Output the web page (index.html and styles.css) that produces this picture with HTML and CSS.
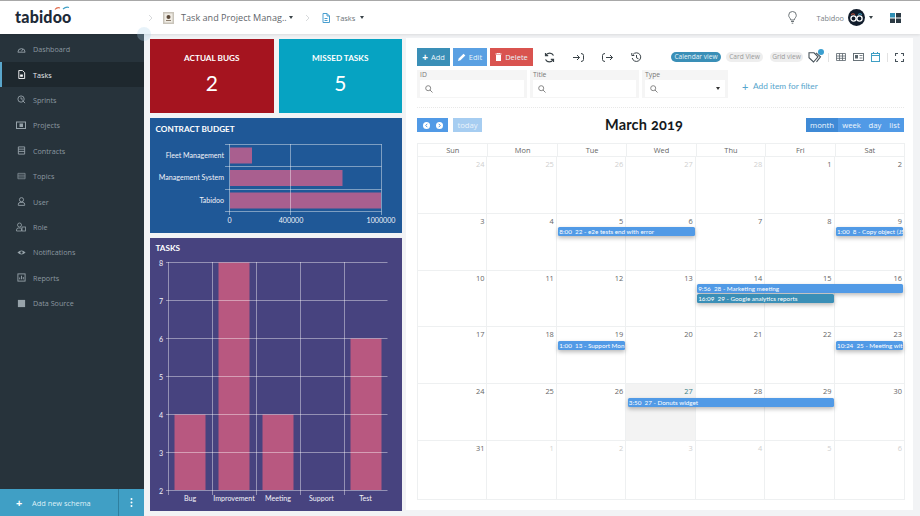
FILE: index.html
```html
<!DOCTYPE html>
<html lang="en">
<head>
<meta charset="utf-8">
<title>Tabidoo</title>
<link rel="stylesheet" href="styles.css">
</head>
<body>
<header class="topbar">
  <div class="logo">
    <span class="logo-text">tabidoo</span>
    <svg class="logo-arcs" viewBox="0 0 16 4" width="16" height="4"><path d="M1 3.500Q3 1 6 2" fill="none" stroke="#e0694a" stroke-width="1.200"/><path d="M9 3Q12 .5 15 1.500" fill="none" stroke="#3f9fc4" stroke-width="1.200"/></svg>
  </div>
  <svg class="chev chev-first" width="5" height="8" viewBox="0 0 5 8"><path d="M1 1l3 3-3 3" fill="none" stroke="#d8dadc"/></svg>
  <span class="app-icon"><svg width="11" height="12" viewBox="0 0 11 12"><rect width="11" height="12" fill="#c9c4ba"/><rect x="1.500" y="1.500" width="8" height="9" fill="#f0ece4"/><circle cx="5.500" cy="5" r="2" fill="#5b4a3a"/><rect x="3" y="8" width="5" height="1" fill="#8b7d6c"/></svg></span>
  <span class="crumb-app">Task and Project Manag..</span>
  <span class="caret caret-app"></span>
  <svg class="chev chev-second" width="5" height="8" viewBox="0 0 5 8"><path d="M1 1l3 3-3 3" fill="none" stroke="#d8dadc"/></svg>
  <svg class="crumb-doc" width="8" height="10" viewBox="0 0 8 10"><path d="M1 .5h4l2.500 2.500v6.500h-6.500zM5 .5v2.500h2.500M2.500 5.500h3M2.500 7.500h3" fill="none" stroke="#4a9fd0"/></svg>
  <span class="crumb-tasks">Tasks</span>
  <span class="caret caret-tasks"></span>
  <div class="top-right">
    <svg class="bulb" width="9" height="13" viewBox="0 0 9 13"><path d="M2.800 9C2.500 7 .7 6.500.7 4.300a3.800 3.800 0 0 1 7.600 0C8.300 6.500 6.500 7 6.200 9zM3 10.500h3M3.700 12.200h1.600" fill="none" stroke="#6d7478" stroke-width="1"/></svg>
    <span class="user-name">Tabidoo</span>
    <svg class="avatar" width="17" height="17" viewBox="0 0 17 17"><circle cx="8.500" cy="8.500" r="8.500" fill="#111c2b"/><circle cx="5.500" cy="9.500" r="2.600" fill="none" stroke="#fff" stroke-width="1.300"/><circle cx="11.500" cy="9.500" r="2.600" fill="none" stroke="#fff" stroke-width="1.300"/><path d="M3 5.500Q5 4 7 5.500" fill="none" stroke="#c9553d"/><path d="M10 5.500Q12 4 14 5.500" fill="none" stroke="#3f9fc4"/></svg>
    <span class="caret caret-user"></span>
    <svg class="apps" width="11" height="10" viewBox="0 0 11 10"><rect width="5" height="4.500" fill="#2f8fb5"/><rect x="6" width="5" height="4.500" fill="#2c3a44"/><rect y="5.500" width="5" height="4.500" fill="#2c3a44"/><rect x="6" y="5.500" width="5" height="4.500" fill="#2c3a44"/></svg>
  </div>
</header>
<span class="collapse-dot"></span>

<div class="shell">
  <nav class="sidebar">
    <ul class="menu">
      <li class="menu-item"><svg class="mi" viewBox="0 0 10 10"><path d="M1 8a4 4 0 1 1 8 0zM5 7l1.500-2.500" fill="none" stroke="currentColor"/></svg>Dashboard</li>
      <li class="menu-item active"><svg class="mi" viewBox="0 0 10 10"><path d="M2 .5h4l2.500 2.500v6.500h-6.500z" fill="none" stroke="currentColor"/><rect x="3.500" y="5" width="3" height="2.500" fill="currentColor"/></svg>Tasks</li>
      <li class="menu-item"><svg class="mi" viewBox="0 0 10 10"><circle cx="4.500" cy="4.500" r="3.500" fill="none" stroke="currentColor"/><path d="M6 6l3 3M4.500 2.500v2h2" fill="none" stroke="currentColor"/></svg>Sprints</li>
      <li class="menu-item"><svg class="mi mi-wide" viewBox="0 0 10 10"><rect x=".5" y="2" width="9" height="6.500" fill="none" stroke="currentColor"/><rect x="3.500" y="3.500" width="3.500" height="3.500" fill="currentColor"/></svg>Projects</li>
      <li class="menu-item"><svg class="mi" viewBox="0 0 10 10"><path d="M1.500 1h7v8h-7zM1.500 3.500h7M1.500 6h7" fill="none" stroke="currentColor"/></svg>Contracts</li>
      <li class="menu-item"><svg class="mi" viewBox="0 0 10 10"><path d="M1 1.500h8M1 3.500h8M1 5.500h8M1 7.500h8M1 1.500v6M9 1.500v6" fill="none" stroke="currentColor" stroke-width=".7"/></svg>Topics</li>
      <li class="menu-item"><svg class="mi" viewBox="0 0 10 10"><circle cx="5" cy="3" r="2.300" fill="none" stroke="currentColor"/><path d="M1.500 9.300v-1.300q0-1.800 2-2h3q2 .2 2 2v1.300z" fill="none" stroke="currentColor"/></svg>User</li>
      <li class="menu-item"><svg class="mi mi-wide" viewBox="0 0 10 10"><circle cx="3.500" cy="3" r="2" fill="none" stroke="currentColor" stroke-width=".8"/><path d="M.5 9v-1q0-2 2-2h2q1 0 1 1v2z" fill="none" stroke="currentColor" stroke-width=".8"/><rect x="6" y="5" width="3.500" height="4" fill="none" stroke="currentColor" stroke-width=".8"/></svg>Role</li>
      <li class="menu-item"><svg class="mi" viewBox="0 0 10 10"><path d="M.5 5Q5 .5 9.500 5 5 9.500.5 5z" fill="currentColor"/><circle cx="5" cy="5" r="1.300" fill="#27333b"/></svg>Notifications</li>
      <li class="menu-item"><svg class="mi" viewBox="0 0 10 10"><rect x="1" y="1" width="8" height="8" fill="none" stroke="currentColor"/><path d="M3 7V5M5 7V3M7 7V4.500" stroke="currentColor"/></svg>Reports</li>
      <li class="menu-item"><svg class="mi" viewBox="0 0 10 10"><rect x="1" y="1" width="8" height="8" fill="currentColor"/></svg>Data Source</li>
    </ul>
    <div class="side-foot">
      <div class="foot-add"><span class="foot-plus">+</span>Add new schema</div>
      <div class="foot-more"><svg width="3" height="9" viewBox="0 0 3 9"><circle cx="1.500" cy="1" r="1" fill="#fff"/><circle cx="1.500" cy="4.500" r="1" fill="#fff"/><circle cx="1.500" cy="8" r="1" fill="#fff"/></svg></div>
    </div>
  </nav>

  <main class="content">
    <section class="widgets">
      <div class="kpis">
        <div class="kpi kpi-red"><div class="kpi-title">ACTUAL BUGS</div><div class="kpi-value">2</div></div>
        <div class="kpi kpi-cyan"><div class="kpi-title">MISSED TASKS</div><div class="kpi-value">5</div></div>
      </div>
      <div class="chart chart-budget">
        <div class="chart-title">CONTRACT BUDGET</div>
        <svg class="budget-svg" viewBox="150 142 252 91" width="252" height="91">
          <g class="bars-b">
            <rect x="230" y="147.500" width="22" height="16"/>
            <rect x="230" y="170" width="112.500" height="16"/>
            <rect x="230" y="192.500" width="151" height="16"/>
          </g>
          <g class="grid-b">
            <path d="M225 144.500H381.500M225 166.500H381.500M225 189.500H381.500M225 211.500H381.500M229.500 144V215M290.500 144V215M381.500 144V215"/>
          </g>
          <g class="lbl lbl-end">
            <text x="224" y="158">Fleet Management</text>
            <text x="224" y="180">Management System</text>
            <text x="224" y="203">Tabidoo</text>
          </g>
          <g class="lbl lbl-mid">
            <text x="229.500" y="222.500">0</text>
            <text x="291" y="222.500">400000</text>
            <text x="381" y="222.500">1000000</text>
          </g>
        </svg>
      </div>
      <div class="chart chart-tasks">
        <div class="chart-title">TASKS</div>
        <svg class="tasks-svg" viewBox="150 258 252 253" width="252" height="253">
          <g class="bars-t">
            <rect x="174.500" y="414.500" width="31" height="75.500"/>
            <rect x="218.500" y="262.500" width="31" height="227.500"/>
            <rect x="262.500" y="414.500" width="31" height="75.500"/>
            <rect x="350.500" y="338.500" width="31" height="151.500"/>
          </g>
          <g class="grid-t">
            <path d="M166 262.500H387.500M166 300.500H387.500M166 338.500H387.500M166 376.500H387.500M166 414.500H387.500M166 452.500H387.500M166 490.500H387.500M168.500 262V495M212.500 262V495M256.500 262V495M300.500 262V495M344.500 262V495"/>
          </g>
          <g class="lbl lbl-mid">
            <text x="161" y="265.500">8</text>
            <text x="161" y="303.500">7</text>
            <text x="161" y="341.500">6</text>
            <text x="161" y="379.500">5</text>
            <text x="161" y="417.500">4</text>
            <text x="161" y="455.500">3</text>
            <text x="161" y="493.500">2</text>
            <text x="190" y="501">Bug</text>
            <text x="234" y="501">Improvement</text>
            <text x="278" y="501">Meeting</text>
            <text x="321.500" y="501">Support</text>
            <text x="365.500" y="501">Test</text>
          </g>
        </svg>
      </div>
    </section>

    <section class="panel">
      <div class="toolbar">
        <button class="btn btn-add"><span class="btn-plus">+</span>Add</button>
        <button class="btn btn-edit"><svg width="8" height="8" viewBox="0 0 8 8"><path d="M0 8l.7-2.500L5.500.7l1.800 1.800-4.800 4.800z" fill="#fff"/></svg>Edit</button>
        <button class="btn btn-del"><svg width="7" height="8" viewBox="0 0 7 8"><path d="M.5 1h6M2.500 1V.2h2V1" stroke="#fff" fill="none"/><path d="M1 2h5v6H1z" fill="#fff"/></svg>Delete</button>
        <svg class="tool tool-first" width="11" height="11" viewBox="0 0 11 11"><path d="M9.500 3.500A4.300 4.300 0 0 0 1.800 3.500M1.500 7.500A4.300 4.300 0 0 0 9.200 7.500M1.500 1v2.700h2.700M9.500 10V7.300H6.800" fill="none" stroke="#3a4348" stroke-width="1.200"/></svg>
        <svg class="tool" width="11" height="9" viewBox="0 0 11 9"><path d="M0 4.500h6.500M4 2l2.500 2.500L4 7M8 .5q2.500 0 2.500 2v4q0 2-2.500 2" fill="none" stroke="#3a4348"/></svg>
        <svg class="tool" width="11" height="9" viewBox="0 0 11 9"><path d="M3 .5q-2.500 0-2.500 2v4q0 2 2.500 2M4 4.500h6.500M8 2l2.500 2.500L8 7" fill="none" stroke="#3a4348"/></svg>
        <svg class="tool" width="11" height="11" viewBox="0 0 11 11"><path d="M2 2.500A4.300 4.300 0 1 1 1.200 6M.8 1v2.500h2.500M5.500 3v2.800l2 1" fill="none" stroke="#3a4348"/></svg>
        <div class="views">
          <span class="pill pill-on">Calendar view</span>
          <span class="pill pill-card">Card View</span>
          <span class="pill pill-grid">Grid view</span>
          <span class="tag-wrap">
            <svg width="15" height="11" viewBox="0 0 15 11"><path d="M1 .8h5l4 4-4.500 5.200-4.500-4.300zM8 .8l4.500 4-4 5" fill="none" stroke="#47525a" stroke-width="1.100"/></svg>
            <span class="tag-badge"></span>
          </span>
          <span class="v-sep"></span>
          <svg class="vicon" width="10" height="8" viewBox="0 0 10 8"><path d="M.5.5h9v7h-9zM.5 3h9M.5 5.300h9M3.500.5v7M6.500.5v7" fill="none" stroke="#5a656c" stroke-width=".8"/></svg>
          <svg class="vicon" width="11" height="8" viewBox="0 0 11 8"><rect x=".5" y=".5" width="10" height="7" fill="none" stroke="#5a656c" stroke-width=".9"/><rect x="2" y="2" width="3" height="3.500" fill="#5a656c"/><path d="M6.500 2.500h3M6.500 5h3" stroke="#5a656c" stroke-width=".8"/></svg>
          <svg class="vicon" width="9" height="10" viewBox="0 0 9 10"><rect x=".5" y="1.500" width="8" height="8" fill="none" stroke="#3f9fc4"/><path d="M.5 3.500h8M2.500 0v2M6.500 0v2" stroke="#3f9fc4"/></svg>
          <span class="v-sep v-sep-b"></span>
          <svg class="vicon" width="9" height="9" viewBox="0 0 9 9"><path d="M.5 3V.5H3M6 .5h2.500V3M8.500 6v2.500H6M3 8.500H.5V6" fill="none" stroke="#47525a" stroke-width="1.100"/></svg>
        </div>
      </div>

      <div class="filters">
        <div class="filter filter-id"><label class="f-label">ID</label><div class="f-input"><svg class="f-search" width="8" height="8" viewBox="0 0 8 8"><circle cx="3.200" cy="3.200" r="2.500" fill="none" stroke="#888"/><path d="M5 5l2.500 2.500" stroke="#888"/></svg></div></div>
        <div class="filter filter-title"><label class="f-label">Title</label><div class="f-input"><svg class="f-search" width="8" height="8" viewBox="0 0 8 8"><circle cx="3.200" cy="3.200" r="2.500" fill="none" stroke="#888"/><path d="M5 5l2.500 2.500" stroke="#888"/></svg></div></div>
        <div class="filter filter-type"><label class="f-label">Type</label><div class="f-input"><svg class="f-search" width="8" height="8" viewBox="0 0 8 8"><circle cx="3.200" cy="3.200" r="2.500" fill="none" stroke="#888"/><path d="M5 5l2.500 2.500" stroke="#888"/></svg><span class="caret f-caret"></span></div></div>
        <div class="add-filter"><span class="add-plus">+</span>Add item for filter</div>
      </div>
      <div class="dots"></div>

      <div class="cal-bar">
        <div class="cal-left">
          <span class="nav-btns">
            <svg width="7" height="7" viewBox="0 0 7 7"><circle cx="3.500" cy="3.500" r="3.500" fill="#fff"/><path d="M4.300 1.800L2.700 3.500l1.600 1.700" fill="none" stroke="#519ae6"/></svg>
            <svg width="7" height="7" viewBox="0 0 7 7"><circle cx="3.500" cy="3.500" r="3.500" fill="#fff"/><path d="M2.700 1.800l1.600 1.700-1.600 1.700" fill="none" stroke="#519ae6"/></svg>
          </span>
          <span class="today-btn">today</span>
        </div>
        <h2 class="cal-title">March 2019</h2>
        <div class="cal-modes"><span class="mode mode-month">month</span><span class="mode mode-week">week</span><span class="mode mode-day">day</span><span class="mode mode-list">list</span></div>
      </div>

      <div class="calendar">
        <div class="cal-head"><span>Sun</span><span>Mon</span><span>Tue</span><span>Wed</span><span>Thu</span><span>Fri</span><span>Sat</span></div>

        <div class="week">
          <div class="day c1 off">24</div><div class="day c2 off">25</div><div class="day c3 off">26</div><div class="day c4 off">27</div><div class="day c5 off">28</div><div class="day c6">1</div><div class="day c7">2</div>
        </div>
        <div class="week">
          <div class="day c1">3</div><div class="day c2">4</div><div class="day c3">5</div><div class="day c4">6</div><div class="day c5">7</div><div class="day c6">8</div><div class="day c7">9</div>
          <div class="ev c3-4 l1">8:00&nbsp; 22 - e2e tests end with error</div>
          <div class="ev c7-7 l1">1:00&nbsp; 8 - Copy object (JS</div>
        </div>
        <div class="week">
          <div class="day c1">10</div><div class="day c2">11</div><div class="day c3">12</div><div class="day c4">13</div><div class="day c5">14</div><div class="day c6">15</div><div class="day c7">16</div>
          <div class="ev c5-7 l1">9:56&nbsp; 28 - Marketing meeting</div>
          <div class="ev ev-dark c5-6 l2">16:09&nbsp; 29 - Google analytics reports</div>
        </div>
        <div class="week">
          <div class="day c1">17</div><div class="day c2">18</div><div class="day c3">19</div><div class="day c4">20</div><div class="day c5">21</div><div class="day c6">22</div><div class="day c7">23</div>
          <div class="ev c3-3 l1">1:00&nbsp; 13 - Support Mon</div>
          <div class="ev c7-7 l1">10:24&nbsp; 25 - Meeting wit</div>
        </div>
        <div class="week">
          <div class="day c1">24</div><div class="day c2">25</div><div class="day c3">26</div><div class="day c4 today">27</div><div class="day c5">28</div><div class="day c6">29</div><div class="day c7">30</div>
          <div class="ev c4-6 l1">3:50&nbsp; 27 - Donuts widget</div>
        </div>
        <div class="week week-last">
          <div class="day c1">31</div><div class="day c2 off">1</div><div class="day c3 off">2</div><div class="day c4 off">3</div><div class="day c5 off">4</div><div class="day c6 off">5</div><div class="day c7 off">6</div>
        </div>
      </div>
    </section>
  </main>
</div>
</body>
</html>
```

FILE: styles.css
```css
* { box-sizing: border-box; }
html, body { margin: 0; padding: 0; }
body {
  width: 920px; height: 516px; overflow: hidden; position: relative;
  font-family: "Open Sans", "Liberation Sans", sans-serif;
  background: #f2f3f5; color: #555;
  display: flex; flex-direction: column;
}

/* top bar */
.topbar {
  height: 34px; flex: none; background: #fff; border-top: 1px solid #a8a8a8;
  display: flex; align-items: center; position: relative; z-index: 2;
  box-shadow: 0 1px 3px rgba(0,0,0,.1);
}
.logo { width: 148px; padding-left: 15px; position: relative; flex: none; top: -1px; }
.logo-text { font-family: Lato, sans-serif; font-weight: 900; font-size: 16px; letter-spacing: .2px; color: #1d2a38; line-height: 20px; display: block; }
.logo-arcs { position: absolute; left: 54px; top: -1px; }
.chev { flex: none; }
.chev-first { margin-right: 10px; }
.app-icon { display: flex; margin-right: 7px; }
.crumb-app { font-size: 9.100px; color: #5f666b; width: 108px; white-space: nowrap; }
.caret { width: 0; height: 0; border-left: 2.5px solid transparent; border-right: 2.5px solid transparent; border-top: 3px solid #3a4348; flex: none; display: inline-block; }
.caret-app { margin-right: 12px; }
.chev-second { margin-right: 12px; }
.crumb-doc { margin-right: 6px; }
.crumb-tasks { font-size: 7.500px; color: #6b7277; width: 24px; }
.top-right { margin-left: auto; display: flex; align-items: center; padding-right: 19px; }
.bulb { margin-right: 19px; }
.user-name { font-size: 7.300px; color: #7a8186; margin-right: 4px; }
.avatar { margin-right: 4px; }
.caret-user { margin-right: 17px; }
.collapse-dot { position: absolute; left: 137px; top: 27px; width: 14px; height: 14px; border-radius: 50%; background: rgba(170,210,235,.28); z-index: 3; }

.shell { flex: 1; display: flex; min-height: 0; }

/* sidebar */
.sidebar { width: 144px; flex: none; background: #27333b; display: flex; flex-direction: column; padding-top: 2.500px; }
.menu { list-style: none; margin: 0; padding: 0; flex: 1; }
.menu-item {
  height: 25.400px; display: flex; align-items: center; padding-left: 15px;
  font-size: 7.200px; color: #8b98a0; border-left: 2px solid transparent;
}
.menu-item.active { background: #1e282e; color: #e8ecee; border-left-color: #5aa6cb; }
.mi { width: 9px; height: 9px; margin-right: 7px; flex: none; color: #97a3aa; }
.mi-wide { width: 10px; height: 10px; margin-left: -1px; margin-right: 7px; }
.active .mi { color: #fff; }
.side-foot { height: 27px; flex: none; background: #409fc5; display: flex; color: #dff0f7; font-size: 7.400px; }
.foot-add { width: 119px; display: flex; align-items: center; padding-left: 16px; border-right: 1px solid #2f7f9f; }
.foot-plus { font-size: 11px; font-weight: 700; color: #fff; width: 16px; line-height: 1; }
.foot-more { flex: 1; display: flex; align-items: center; justify-content: center; }

/* main */
.content { flex: 1; display: flex; padding: 4px 7px 5px 6px; gap: 4px; min-width: 0; }
.widgets { width: 252px; flex: none; display: flex; flex-direction: column; gap: 5px; padding-top: 1px; }
.kpis { display: flex; gap: 5px; height: 74px; flex: none; }
.kpi { flex: 1; color: #fff; text-align: center; padding-top: 13px; }
.kpi-red { background: #a5141f; }
.kpi-cyan { background: #06a3c2; }
.kpi-title { font-family: Lato, sans-serif; font-weight: 700; font-size: 8.200px; line-height: 12px; }
.kpi-value { font-family: Lato, sans-serif; font-size: 21px; line-height: 24px; margin-top: 7px; }

.chart { color: #fff; flex: none; }
.chart-budget { background: #1f5897; height: 115px; }
.chart-tasks { background: #47437f; flex: 1; }
.chart-title { font-family: Lato, sans-serif; font-weight: 700; font-size: 8.200px; padding-left: 5.500px; line-height: 12px; padding-top: 5px; }
.chart-budget .chart-title { height: 24px; }
.chart-tasks .chart-title { height: 20px; padding-top: 4px; }
.budget-svg, .tasks-svg { display: block; }
.bars-b rect { fill: #a95f8f; }
.bars-t rect { fill: #b85880; }
.grid-b path, .grid-t path { fill: none; stroke: rgba(255,255,255,.42); stroke-width: 1; }
.lbl text { font-family: Lato, sans-serif; font-size: 7.100px; fill: #f2f2f8; }
.lbl-end text { text-anchor: end; }
.lbl-mid text { text-anchor: middle; }

/* calendar panel */
.panel { flex: 1; background: #fff; padding: 10px 9px 0 11px; min-width: 0; display: flex; flex-direction: column; margin-bottom: 1px; }
.toolbar { display: flex; align-items: center; height: 18px; flex: none; }
.btn {
  border: 0; padding: 0; height: 18px; color: #e9f4fa; font: 7.500px "Open Sans", sans-serif;
  display: flex; align-items: center; justify-content: center; gap: 3px; margin-right: 3px;
}
.btn-add { width: 33px; background: #3a8fb7; }
.btn-plus { font-size: 10px; font-weight: 700; line-height: 1; color: #fff; }
.btn-edit { width: 34px; background: #5aa0e2; }
.btn-del { width: 43px; background: #d9534f; }
.tool { margin-left: 18px; flex: none; }
.tool-first { margin-left: 8px; }
.views { margin-left: auto; display: flex; align-items: center; }
.pill { font-size: 6.600px; line-height: 10px; height: 10px; border-radius: 5px; background: #eeeeee; color: #9a9a9a; white-space: nowrap; text-align: center; }
.pill-on { background: #3a8fb7; color: #e6f4fa; width: 50px; margin-right: 5px; }
.pill-card { width: 37px; margin-right: 7px; }
.pill-grid { width: 33px; }
.tag-wrap { position: relative; display: flex; margin: 0 2px 0 5px; }
.tag-badge { position: absolute; right: -1px; top: -3px; width: 6px; height: 6px; border-radius: 50%; background: #3a9fd0; }
.v-sep { width: 1px; height: 9px; background: #e2e2e2; margin: 0 7px 0 3px; }
.v-sep-b { margin: 0 7px 0 0; }
.vicon { margin-right: 7px; flex: none; }
.vicon:last-child { margin-right: 0; }

.filters { display: flex; gap: 3px; margin-top: 4px; height: 28px; flex: none; align-items: stretch; }
.filter { background: #f5f5f5; padding: 0 3px 1px; display: flex; flex-direction: column; }
.filter-id { width: 110px; }
.filter-title { width: 109px; }
.filter-type { width: 86px; }
.f-label { font-size: 6.800px; line-height: 10px; color: #777; height: 10px; }
.f-input { flex: 1; background: #fff; display: flex; align-items: center; justify-content: space-between; padding: 0 5px; }
.f-caret { border-top-color: #333; }
.add-filter { margin-left: 11px; align-self: center; font-family: Lato, sans-serif; font-size: 8.300px; color: #55a5cc; display: flex; align-items: center; margin-top: 4px; }
.add-plus { font-size: 11px; width: 11px; line-height: 1; }
.dots { height: 1px; margin-top: 9px; border-top: 1px dotted #e8e8e8; flex: none; }

.cal-bar { display: flex; align-items: center; justify-content: space-between; margin-top: 10px; height: 14px; flex: none; }
.cal-left { display: flex; width: 65px; gap: 5px; }
.nav-btns { width: 31px; height: 14px; background: #519ae6; display: flex; align-items: center; justify-content: space-between; padding: 0 5px 0 6px; }
.today-btn { width: 29px; height: 14px; background: #a6cdf1; color: #e8f2fb; font-size: 7.700px; line-height: 14px; text-align: center; }
.cal-title { margin: 0; font-family: Lato, sans-serif; font-weight: 700; font-size: 14.500px; color: #15191c; line-height: 14px; letter-spacing: .2px; font-variant-numeric: oldstyle-nums; }
.cal-modes { display: flex; width: 98px; height: 14px; background: #519ae6; color: #f0f7fd; font-size: 7.700px; line-height: 14px; }
.mode { text-align: center; }
.mode-month { width: 32px; background: #3f8ad6; }
.mode-week { width: 27px; }
.mode-day { width: 20px; }
.mode-list { width: 19px; }

.calendar { margin-top: 11px; width: 488px; flex: 1; display: flex; flex-direction: column; padding-bottom: 6px; }
.cal-head { display: grid; grid-template-columns: repeat(7, 1fr); height: 13px; flex: none; font-size: 7.400px; line-height: 12px; color: #666; text-align: center; border: 1px solid #eef0f1; border-bottom: 0; }
.cal-head span + span { border-left: 1px solid #eef0f1; }
.week {
  display: grid; grid-template-columns: repeat(7, 1fr); grid-template-rows: 13.500px 9.500px 9.500px 1fr;
  height: 56.800px; flex: none; border-top: 1px solid #eef0f1; border-left: 1px solid #eef0f1; border-right: 1px solid #eef0f1;
}
.week-last { height: 60px; border-bottom: 1px solid #eef0f1; }
.day { grid-row: 1 / -1; font-size: 7.400px; line-height: 14px; color: #666; text-align: right; padding-right: 2px; border-right: 1px solid #eef0f1; }
.c7 { border-right: 0; }
.off { color: #cfcfcf; }
.today { background: #f3f3f3; color: #3c7f86; }
.c1 { grid-column: 1; } .c2 { grid-column: 2; } .c3 { grid-column: 3; } .c4 { grid-column: 4; }
.c5 { grid-column: 5; } .c6 { grid-column: 6; } .c7 { grid-column: 7; }
.ev {
  z-index: 1; background: #519ae6; color: #fff; font-family: Lato, sans-serif; font-size: 6.300px; line-height: 9px; height: 9px;
  border-radius: 1.500px; padding-left: 1px; margin: 0 1px 0 1.500px; white-space: nowrap; overflow: hidden;
  box-shadow: 0 2px 4px rgba(0,0,0,.28);
}
.ev-dark { background: #3a8fb7; }
.l1 { grid-row: 2; } .l2 { grid-row: 3; }
.c3-4 { grid-column: 3 / 5; } .c7-7 { grid-column: 7; } .c5-7 { grid-column: 5 / 8; }
.c5-6 { grid-column: 5 / 7; } .c3-3 { grid-column: 3; } .c4-6 { grid-column: 4 / 7; }
```
